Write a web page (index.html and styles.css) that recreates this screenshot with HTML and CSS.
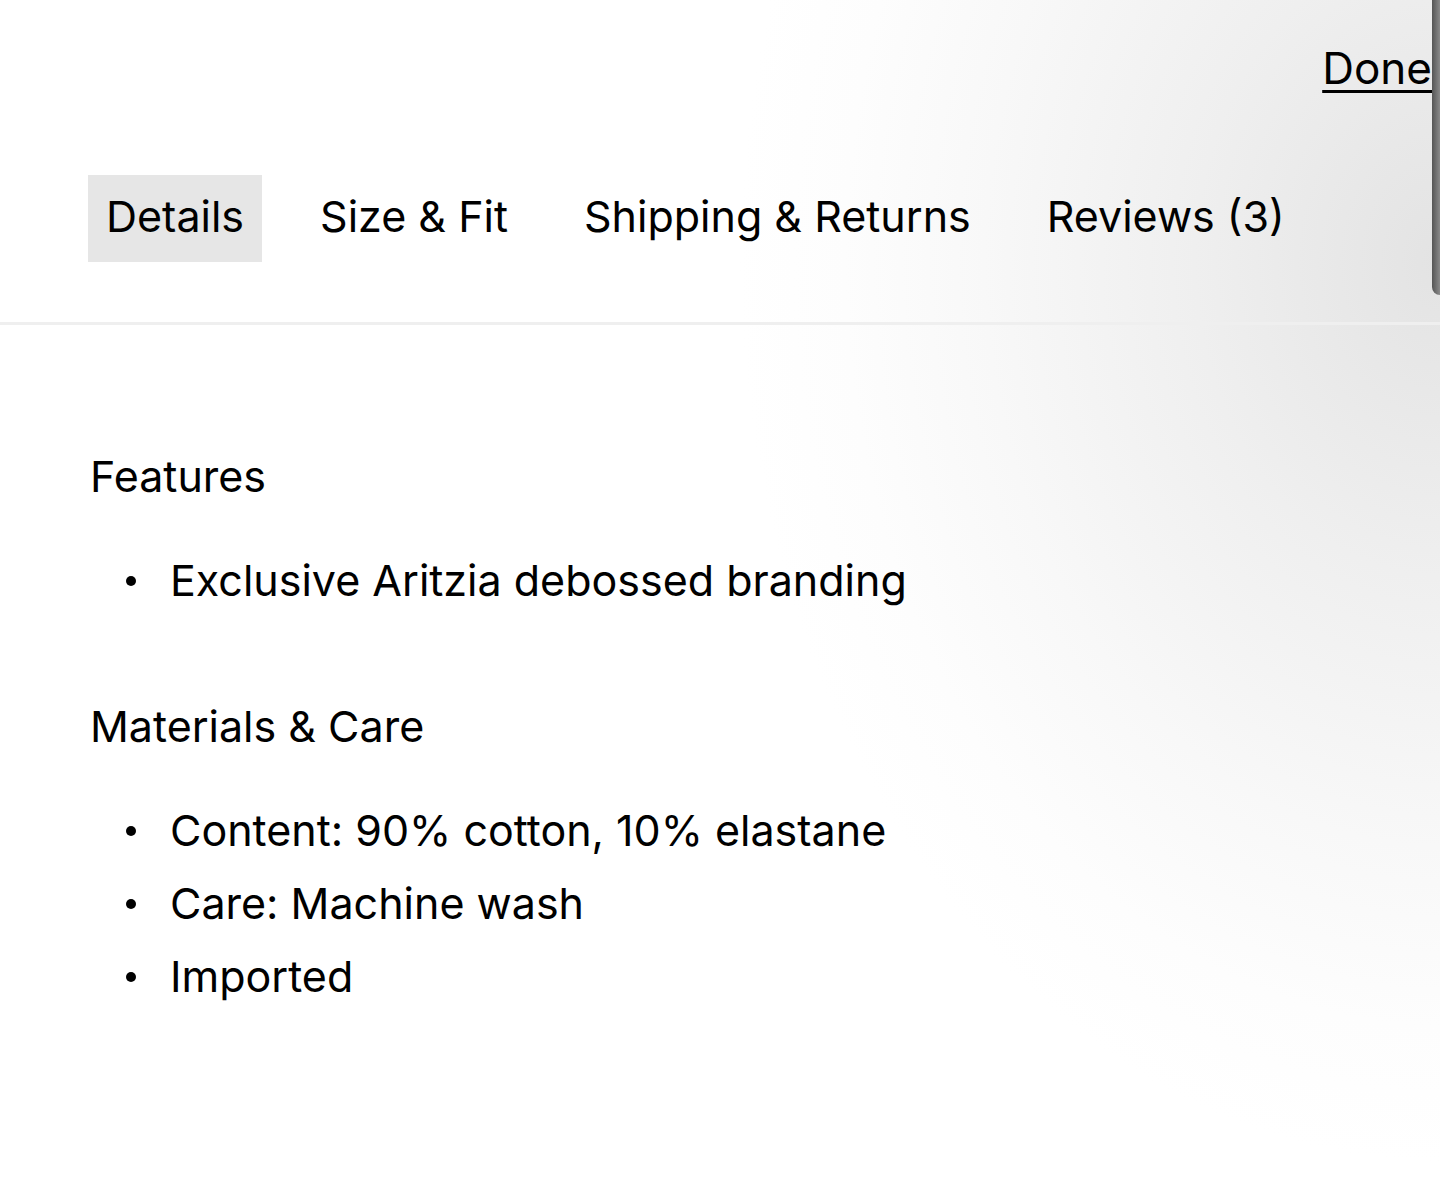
FILE: index.html
```html
<!DOCTYPE html>
<html lang="en">
<head>
  <meta charset="UTF-8" />
  <meta name="viewport" content="width=device-width, initial-scale=1.0"/>
  <title>Details</title>
  <link rel="stylesheet" href="styles.css">
</head>
<body>

  <div class="sheet">
    <div class="topbar">
      <a class="done" href="#">Done</a>
    </div>

    <div class="tabs">
      <button class="tab active">Details</button>
      <button class="tab">Size &amp; Fit</button>
      <button class="tab">Shipping &amp; Returns</button>
      <button class="tab">Reviews (3)</button>
    </div>

    <div class="panel">
      <h3 class="section-title">Features</h3>
      <ul class="points">
        <li>Exclusive Aritzia debossed branding</li>
      </ul>

      <h3 class="section-title">Materials &amp; Care</h3>
      <ul class="points">
        <li>Content: 90% cotton, 10% elastane</li>
        <li>Care: Machine wash</li>
        <li>Imported</li>
      </ul>
    </div>

    <div class="scroll-thumb"></div>
  </div>

</body>
</html>
```

FILE: styles.css
```css
body {
  margin: 0;
  background: #fff;
  color: #000;
  font-family: Inter, 'Noto Sans', sans-serif;
}
.sheet {
  position: relative;
  min-height: 100vh;
  background: radial-gradient(ellipse 700px 900px at 100% 22%, #e3e3e3 0%, #efefef 35%, #f8f8f8 65%, #fdfdfd 85%, #fff 100%);
}
.topbar {
  display: flex;
  justify-content: flex-end;
  padding: 40px 8px 0 0;
  height: 135px;
  box-sizing: border-box;
}
.done {
  color: #000;
  font-size: 44px;
  line-height: 56px;
  text-decoration: underline;
  text-decoration-thickness: 3px;
  text-underline-offset: 6px;
}
.tabs {
  display: flex;
  gap: 40px;
  padding: 40px 0 60px 88px;
  border-bottom: 3px solid #efefef;
}
.tab {
  font-family: inherit;
  font-size: 43px;
  height: 87px;
  padding: 0 18px 5px;
  border: none;
  background: none;
  color: #000;
  cursor: pointer;
}
.tab.active {
  background: #e6e6e6;
}
.panel {
  padding: 123px 0 0 90px;
}
.section-title {
  font-size: 43px;
  font-weight: 400;
  line-height: 56px;
  margin: 0 0 40px;
}
.points {
  list-style: none;
  margin: 0 0 81px;
  padding: 0;
}
.points li {
  display: flex;
  align-items: center;
  font-size: 43px;
  line-height: 73px;
}
.points li::before {
  content: "";
  width: 10px;
  height: 10px;
  margin: 0 34px 0 36px;
  border-radius: 50%;
  background: #000;
}
.scroll-thumb {
  position: absolute;
  top: 0;
  right: 0;
  width: 8px;
  height: 295px;
  border-radius: 0 0 0 8px;
  background: linear-gradient(to right, #555, #8a8a8a);
}
```
